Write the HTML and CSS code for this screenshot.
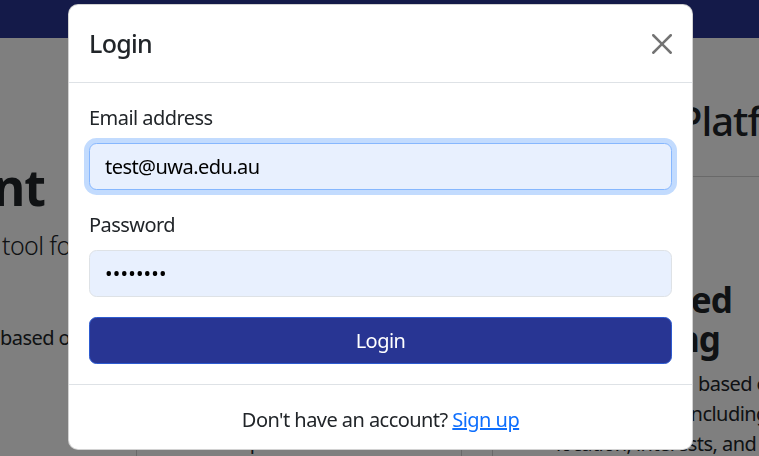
FILE: index.html
```html
<!DOCTYPE html>
<html lang="en">
<head>
<meta charset="utf-8">
<title>UWA Placement Management – Login</title>
<link rel="stylesheet" href="styles.css">
</head>
<body>
<div class="site">
  <nav class="navbar"></nav>
  <main class="landing">
    <section class="hero">
      <h1 class="hero-title">Placement</h1>
      <p class="hero-lead"><span class="lead-in lead-in-2">An intelligent </span>tool for managing placements</p>
      <p class="hero-text"><span class="lead-in lead-in-0">Students are matched </span>based on their profiles</p>
    </section>
    <h2 class="section-title">Platform Features</h2>
    <article class="card card-left">
      <p class="card-text">informed placement decisions.</p>
    </article>
    <article class="card card-right">
      <h3 class="card-title"><span class="title-line-1">AI-Powered</span><span class="title-line-2">Matching</span></h3>
      <p class="card-text card-text-left">
        <span class="text-line"><span class="lead-in lead-in-142">Smart matching </span>based on</span>
        <span class="text-line"><span class="lead-in lead-in-130">multiple factors </span>including</span>
        <span class="text-line">location, interests, and</span>
      </p>
    </article>
  </main>
</div>

<div class="modal-backdrop"></div>

<div class="modal" role="dialog" aria-labelledby="loginTitle">
  <div class="modal-header">
    <h5 class="modal-title" id="loginTitle">Login</h5>
    <button type="button" class="btn-close" aria-label="Close">
      <svg viewBox="0 0 16 16" width="20" height="20" aria-hidden="true"><path d="M.293.293a1 1 0 0 1 1.414 0L8 6.586 14.293.293a1 1 0 1 1 1.414 1.414L9.414 8l6.293 6.293a1 1 0 0 1-1.414 1.414L8 9.414l-6.293 6.293a1 1 0 0 1-1.414-1.414L6.586 8 .293 1.707a1 1 0 0 1 0-1.414z"/></svg>
    </button>
  </div>
  <form class="modal-body">
    <div class="field">
      <label class="form-label" for="email">Email address</label>
      <input class="form-control is-focused" id="email" type="email" value="test@uwa.edu.au">
    </div>
    <div class="field">
      <label class="form-label" for="password">Password</label>
      <input class="form-control form-password" id="password" type="password" value="password">
    </div>
    <button type="submit" class="btn-primary">Login</button>
  </form>
  <div class="modal-footer">
    <p>Don't have an account? <a href="#">Sign up</a></p>
  </div>
</div>
</body>
</html>
```

FILE: styles.css
```css
* {
  box-sizing: border-box;
  margin: 0;
  padding: 0;
}

html,
body {
  width: 759px;
  height: 456px;
  overflow: hidden;
}

body {
  font-family: "Noto Sans", "Open Sans", sans-serif;
  font-size: 20px;
  line-height: 1.5;
  letter-spacing: -0.55px;
  color: #212529;
  background: #fff;
}

/* ---------- background page ---------- */
.navbar {
  height: 38px;
  background: #283593;
}

.landing {
  display: grid;
  grid-template-columns: 136px 326px 30px 326px;
  grid-template-rows: 138px auto;
}

.hero {
  grid-column: 1;
  grid-row: 1 / 3;
  padding-top: 119px;
  white-space: nowrap;
}

.hero-title {
  width: 45px;
  display: flex;
  justify-content: flex-end;
  font-size: 50px;
  font-weight: 700;
  line-height: 1.2;
  letter-spacing: -1px;
  margin-bottom: 10px;
}

.hero-lead {
  display: flex;
  white-space: pre;
  font-size: 25px;
  font-weight: 300;
  line-height: 1.5;
  letter-spacing: -0.6px;
  margin-bottom: 58px;
}

.hero-text {
  display: flex;
  white-space: pre;
}

.lead-in {
  display: flex;
  justify-content: flex-end;
  flex: none;
  white-space: pre;
}

.lead-in-0 { width: 0; }
.lead-in-2 { width: 2px; }
.lead-in-130 { width: 130px; }
.lead-in-142 { width: 142px; }

.section-title {
  grid-column: 4;
  grid-row: 1;
  padding-left: 186px;
  margin-top: 59px;
  font-size: 40px;
  font-weight: 500;
  line-height: 1.2;
  letter-spacing: -1px;
  white-space: nowrap;
}

.card {
  grid-row: 2;
  height: 320px;
  border: 1px solid rgba(0, 0, 0, 0.175);
  border-radius: 8px;
  background: #fff;
}

.card-left {
  grid-column: 2;
  padding: 250px 20px 0;
  text-align: center;
}

.card-right {
  grid-column: 4;
  padding: 103px 20px 0 63px;
}

.card-title {
  display: flex;
  flex-direction: column;
  align-items: flex-end;
  width: 176px;
  font-size: 35px;
  font-weight: 700;
  line-height: 1.12;
  letter-spacing: -0.9px;
  white-space: nowrap;
  margin-bottom: 11px;
}

.title-line-2 {
  margin-right: 12px;
}

.card-text-left {
  display: flex;
  flex-direction: column;
  white-space: pre;
}

.text-line {
  display: flex;
}

/* ---------- modal ---------- */
.modal-backdrop {
  position: fixed;
  inset: 0;
  background: rgba(0, 0, 0, 0.5);
}

.modal {
  position: fixed;
  left: 68px;
  top: 4px;
  width: 625px;
  background: #fff;
  border: 1px solid rgba(0, 0, 0, 0.175);
  border-radius: 10px;
}

.modal-header {
  display: flex;
  align-items: center;
  justify-content: space-between;
  padding: 20px;
  border-bottom: 1px solid #dee2e6;
}

.modal-title {
  font-size: 25px;
  font-weight: 500;
  line-height: 37px;
  letter-spacing: -0.7px;
}

.btn-close {
  display: flex;
  width: 20px;
  height: 20px;
  border: 0;
  background: transparent;
  color: rgba(0, 0, 0, 0.55);
  cursor: pointer;
}

.btn-close svg {
  fill: currentColor;
}

.modal-body {
  display: flex;
  flex-direction: column;
  padding: 20px;
}

.field {
  margin-bottom: 20px;
}

.form-label {
  display: block;
  margin-bottom: 10px;
}

.form-control {
  display: block;
  width: 100%;
  height: 47px;
  padding: 7px 15px;
  font-family: inherit;
  font-size: 20px;
  line-height: 1.5;
  letter-spacing: -0.55px;
  color: #000;
  background: #e8f0fe;
  border: 1px solid #dee2e6;
  border-radius: 7.5px;
  outline: none;
}

.form-password {
  letter-spacing: 0.2px;
}

.form-control.is-focused {
  border-color: #86b7fe;
  box-shadow: 0 0 0 5px rgba(13, 110, 253, 0.25);
}

.btn-primary {
  width: 100%;
  height: 47px;
  padding: 7px 15px;
  font-family: inherit;
  font-size: 20px;
  line-height: 1.5;
  letter-spacing: -0.55px;
  color: #fff;
  background: #283593;
  border: 1px solid #2d5bd0;
  border-radius: 7.5px;
  cursor: pointer;
}

.modal-footer {
  display: flex;
  justify-content: center;
  padding: 20px 20px 14px;
  border-top: 1px solid #dee2e6;
}

.modal-footer a {
  color: #0d6efd;
  text-decoration: underline;
}
```
